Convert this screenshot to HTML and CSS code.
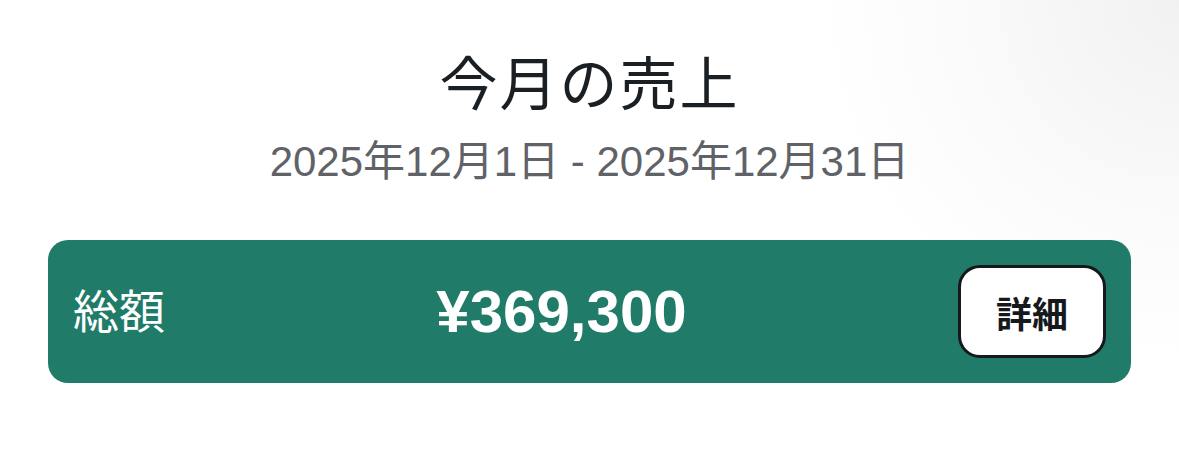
FILE: index.html
```html
<!DOCTYPE html>
<html lang="ja">
<head>
	<meta charset="utf-8">
	<title>今月の売上</title>
	<link rel="stylesheet" href="styles.css">
</head>
<body>
	<div class="sales">
		<h1 class="sales-title">今月の売上</h1>
		<p class="sales-period">2025年12月1日 - 2025年12月31日</p>

		<div class="total-card">
			<span class="total-label">総額</span>
			<span class="total-amount">¥369,300</span>
			<button type="button" class="detail-btn">詳細</button>
		</div>
	</div>
</body>
</html>
```

FILE: styles.css
```css
html, body{
	margin: 0;
	height: 100%;
}
body{
	font-family: "Liberation Sans", "Noto Sans CJK JP", sans-serif;
	background: radial-gradient(circle at 100% 0, #f1f1f1 0, #f9f9f9 180px, #ffffff 360px);
	color: #1a1f24;
}
.sales{
	padding: 50px 48px 0 48px;
	display: flex;
	flex-direction: column;
	align-items: center;
}
.sales-title{
	margin: 0;
	font-size: 58px;
	font-weight: normal;
	line-height: 70px;
	letter-spacing: 2px;
}
.sales-period{
	margin: 17px 0 0 0;
	font-size: 42px;
	line-height: 50px;
	color: #5f6368;
}
.total-card{
	align-self: stretch;
	margin-top: 53px;
	height: 143px;
	box-sizing: border-box;
	padding: 0 25px;
	background-color: #207c68;
	border-radius: 20px;
	display: flex;
	align-items: center;
	justify-content: space-between;
	color: #ffffff;
}
.total-label{
	font-size: 46px;
	line-height: 1;
}
.total-amount{
	font-size: 60px;
	font-weight: bold;
	line-height: 1;
}
.detail-btn{
	width: 148px;
	height: 93px;
	background-color: #ffffff;
	border: 3px solid #15191c;
	border-radius: 22px;
	font-family: inherit;
	font-size: 36px;
	font-weight: bold;
	color: #15191c;
	padding: 0;
}
```
